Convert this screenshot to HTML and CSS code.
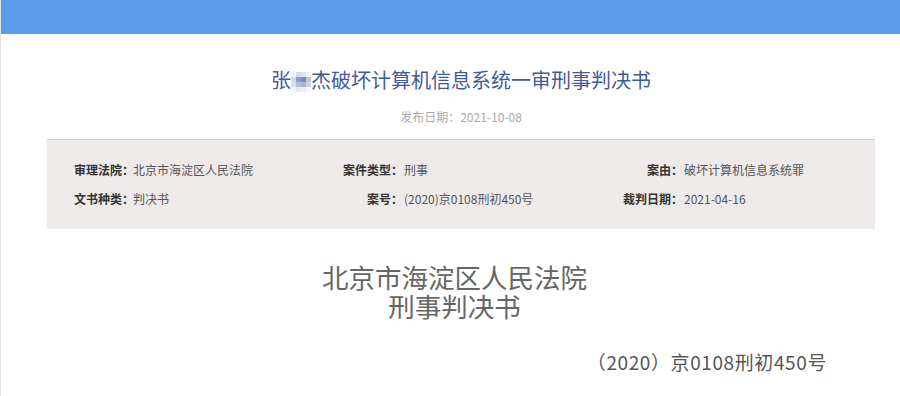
FILE: index.html
```html
<!DOCTYPE html>
<html lang="zh-CN">
<head>
<meta charset="utf-8">
<title>张某杰破坏计算机信息系统一审刑事判决书</title>
<link rel="stylesheet" href="styles.css">
</head>
<body>
<div class="topbar"></div>
<main class="doc">
  <h1 class="title">张<span class="mosaic"><span class="cells"><i class="c1"></i><i class="c2"></i><i class="c3"></i><i class="c4"></i><i class="c5"></i><i class="c6"></i><i class="c7"></i><i class="c8"></i><i class="c9"></i><i class="c10"></i><i class="c11"></i><i class="c12"></i><i class="c13"></i><i class="c14"></i><i class="c15"></i><i class="c16"></i></span></span>杰破坏计算机信息系统一审刑事判决书</h1>
  <div class="pubdate">发布日期：2021-10-08</div>
  <section class="info">
    <div class="lbl l1">审理法院：</div><div class="val">北京市海淀区人民法院</div>
    <div class="lbl">案件类型：</div><div class="val">刑事</div>
    <div class="lbl">案由：</div><div class="val">破坏计算机信息系统罪</div>
    <div class="lbl l1">文书种类：</div><div class="val">判决书</div>
    <div class="lbl">案号：</div><div class="val">(2020)京0108刑初450号</div>
    <div class="lbl">裁判日期：</div><div class="val">2021-04-16</div>
  </section>
  <h2 class="court">北京市海淀区人民法院<br>刑事判决书</h2>
  <p class="caseno">（2020）京0108刑初450号</p>
</main>
</body>
</html>
```
FILE: styles.css
```css
html, body {
  margin: 0;
  padding: 0;
  background: #fff;
}
body {
  border-left: 1px solid #e6e2e2;
  min-height: 396px;
  box-sizing: border-box;
  font-family: "Noto Sans CJK SC", "Noto Sans", sans-serif;
  overflow: hidden;
}
.topbar {
  height: 34px;
  background: #5c9ce9;
}
.doc {
  margin-left: 46px;
  width: 828px;
}
.title {
  margin: 32px 0 0;
  font-size: 20px;
  line-height: 28px;
  font-weight: normal;
  color: #3f5b9c;
  text-align: center;
}
.mosaic {
  display: inline-block;
  width: 20px;
  height: 20px;
  vertical-align: -4px;
  overflow: hidden;
  line-height: 0;
}
.cells {
  display: grid;
  grid-template-columns: repeat(4, 5px);
  grid-template-rows: repeat(4, 5px);
}
.cells i { display: block; }
.c1 { background: #eef0f6; } .c2 { background: #d6dbea; } .c3 { background: #dfe3ee; } .c4 { background: #f0f2f7; }
.c5 { background: #d3d8e8; } .c6 { background: #8f9dc8; } .c7 { background: #7b8cbf; } .c8 { background: #bcc4de; }
.c9 { background: #dce0ec; } .c10 { background: #b5bdd8; } .c11 { background: #aab3d2; } .c12 { background: #ccd2e4; }
.c13 { background: #f3f4f8; } .c14 { background: #e6e9f1; } .c15 { background: #eceef4; } .c16 { background: #f7f8fa; }
.pubdate {
  margin-top: 14px;
  font-size: 12px;
  line-height: 18px;
  color: #a9a9a9;
  text-align: center;
}
.info {
  margin-top: 13px;
  border-top: 1px solid #cfcfcf;
  background: #eeeaea;
  padding: 15px 0 16px 27px;
  display: grid;
  grid-template-columns: 58px 168px 103px 157px 123px 1fr;
  grid-auto-rows: 29px;
  align-items: center;
  font-size: 12px;
}
.lbl {
  font-weight: bold;
  color: #333;
  text-align: right;
  white-space: nowrap;
}
.lbl.l1 { text-align: left; }
.val {
  color: #555;
  padding-left: 1px;
  white-space: nowrap;
}
.court {
  margin: 33px 0 0;
  padding-right: 13px;
  font-size: 26.5px;
  line-height: 29px;
  font-weight: normal;
  color: #666;
  text-align: center;
}
.caseno {
  margin: 30px 0 0;
  padding-right: 48px;
  font-size: 19px;
  line-height: 24px;
  letter-spacing: 0.6px;
  color: #555;
  text-align: right;
}
```
